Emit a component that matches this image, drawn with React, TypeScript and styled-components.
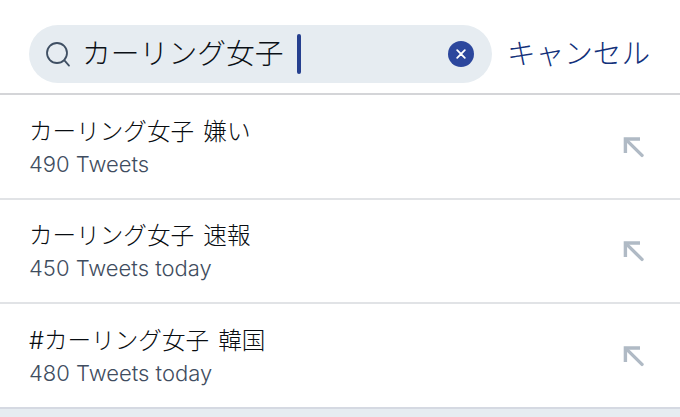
import React from "react"
import styled, { createGlobalStyle } from "styled-components"

const GlobalStyle = createGlobalStyle`
  html, body {
    margin: 0;
    padding: 0;
    background: #ffffff;
    font-family: "Inter", "Liberation Sans", "Noto Sans CJK JP", sans-serif;
  }
`

const suggestions = [
  { title: "カーリング女子 嫌い", count: "490 Tweets" },
  { title: "カーリング女子 速報", count: "450 Tweets today" },
  { title: "#カーリング女子 韓国", count: "480 Tweets today" },
]

export default function App() {
  return (
    <Page>
      <GlobalStyle />
      <Header>
        <SearchPill>
          <svg width="26" height="26" viewBox="0 0 26 26" fill="none" stroke="#3f4f63" strokeWidth="1.8" strokeLinecap="round">
            <circle cx="12" cy="12" r="10" />
            <path d="M19.4 19.4 L24 24.6" />
          </svg>
          <SearchText>カーリング女子</SearchText>
          <Caret />
          <ClearButton>
            <svg width="10" height="10" viewBox="0 0 10 10" stroke="#ffffff" strokeWidth="1.8" strokeLinecap="round">
              <path d="M1.2 1.2 L8.8 8.8 M8.8 1.2 L1.2 8.8" />
            </svg>
          </ClearButton>
        </SearchPill>
        <CancelLabel>キャンセル</CancelLabel>
      </Header>
      <List>
        {suggestions.map((item) => (
          <Row key={item.title}>
            <RowText>
              <Title>{item.title}</Title>
              <Count>{item.count}</Count>
            </RowText>
            <ArrowIcon width="22" height="22" viewBox="0 0 22 22" fill="none" stroke="#b0bac5" strokeWidth="3.4" strokeLinejoin="miter">
              <path d="M3.4 17 V3 H18" />
              <path d="M4 3.6 L20 19.4" strokeLinecap="round" />
            </ArrowIcon>
          </Row>
        ))}
      </List>
      <Footer />
    </Page>
  )
}

const Page = styled.div`
  width: 680px;
  height: 417px;
  overflow: hidden;
  display: flex;
  flex-direction: column;
  background: #ffffff;
`

const Header = styled.header`
  box-sizing: border-box;
  height: 95px;
  padding: 25px 30px 10px 29px;
  display: flex;
  align-items: flex-start;
  justify-content: space-between;
  border-bottom: 2px solid #d4d5d8;
`

const SearchPill = styled.div`
  box-sizing: border-box;
  width: 463px;
  height: 58px;
  padding: 0 17px 0 16px;
  display: flex;
  align-items: center;
  border-radius: 29px;
  background: #e6ecf1;
`

const SearchText = styled.span`
  margin-left: 11px;
  font-size: 28.8px;
  font-weight: 300;
  line-height: 58px;
  color: #0b1016;
`

const Caret = styled.span`
  width: 4px;
  height: 40px;
  margin-left: 13px;
  border-radius: 2px;
  background: #26408f;
`

const ClearButton = styled.span`
  width: 26px;
  height: 26px;
  margin-left: auto;
  margin-right: 1px;
  display: flex;
  align-items: center;
  justify-content: center;
  border-radius: 50%;
  background: #2c479d;
`

const CancelLabel = styled.span`
  font-size: 28.6px;
  font-weight: 300;
  line-height: 58px;
  color: #12307a;
  white-space: nowrap;
`

const List = styled.div`
  display: flex;
  flex-direction: column;
`

const Row = styled.div`
  box-sizing: border-box;
  height: 104.5px;
  padding: 0 36px 0 29px;
  display: flex;
  align-items: center;
  justify-content: space-between;
  border-bottom: 2px solid #e1e3e6;

  &:last-child {
    border-bottom-color: #d5d9e2;
  }
`

const RowText = styled.div`
  display: flex;
  flex-direction: column;
  margin-top: -1px;
`

const Title = styled.div`
  font-size: 23.6px;
  font-weight: 300;
  word-spacing: 2.5px;
  line-height: 36px;
  color: #080c11;
`

const Count = styled.div`
  font-size: 22px;
  font-weight: 350;
  line-height: 28px;
  color: #3f4d60;
`

const ArrowIcon = styled.svg`
  margin-top: 1px;
`

const Footer = styled.div`
  flex: 1;
  background: #e6ecf1;
`
